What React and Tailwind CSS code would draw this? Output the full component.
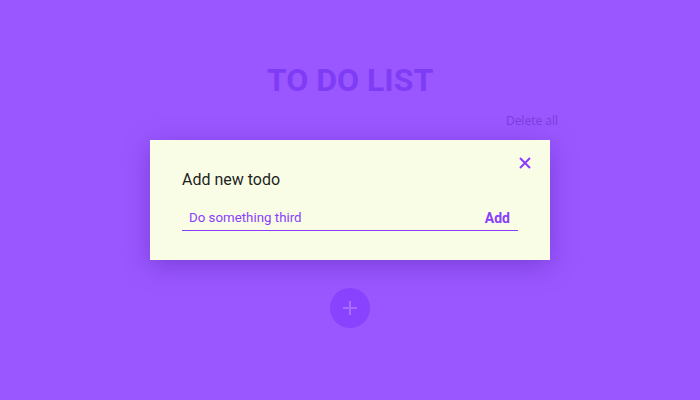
import React, { useState } from 'react';

const App = () => {
  const [todo, setTodo] = useState('Do something third');

  return (
    <div className="w-[700px] h-[400px] bg-[#9a57ff] flex flex-col items-center" style={{ fontFamily: 'Roboto, sans-serif' }}>
      <h1 className="mt-[60px] text-[32px] leading-[40px] font-bold text-[#7f3cf5]">TO DO LIST</h1>

      {/* delete all row */}
      <div className="w-[416px] flex justify-end mt-[12px]">
        <button className="text-[12px] leading-[18px] text-[#7a3edb]" style={{ fontFamily: '"Open Sans", sans-serif' }}>
          Delete all
        </button>
      </div>

      {/* add todo modal */}
      <div className="mt-[10px] w-[400px] h-[120px] bg-[#f9fde6] shadow-[0_6px_24px_rgba(70,20,150,0.35)] relative px-[32px] pt-[31px]">
        <button className="absolute top-[17px] right-[19px] text-[#8a3cff]">
          <svg width="12" height="12" viewBox="0 0 12 12" fill="none" stroke="currentColor" strokeWidth="2">
            <path d="M1 1l10 10M11 1L1 11" />
          </svg>
        </button>
        <p className="text-[16px] leading-[18px] text-[#1f1f1f]">Add new todo</p>
        <div className="mt-[20px] flex items-center border-b border-[#8a3cff] pb-[3px]">
          <input
            value={todo}
            onChange={(e) => setTodo(e.target.value)}
            className="flex-1 bg-transparent outline-none text-[13.3px] leading-[18px] text-[#8a3cff] pl-[7px]"
          />
          <button className="text-[14px] leading-[18px] font-bold text-[#8a3cff] pr-[8px]">Add</button>
        </div>
      </div>

      {/* fab */}
      <button className="mt-[28px] w-[40px] h-[40px] rounded-full bg-[#8943ff] flex items-center justify-center text-[#a56cff]">
        <svg width="16" height="16" viewBox="0 0 16 16" fill="none" stroke="currentColor" strokeWidth="2">
          <path d="M8 1v14M1 8h14" />
        </svg>
      </button>
    </div>
  );
};

export default App;
